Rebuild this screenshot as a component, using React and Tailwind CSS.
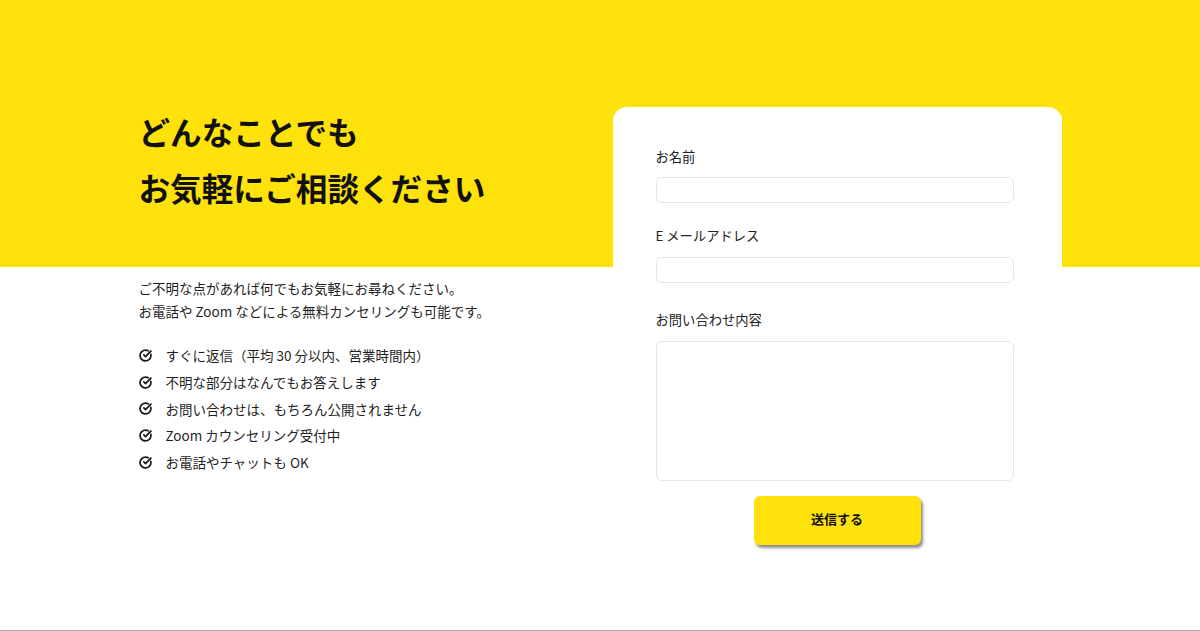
import React from "react";

function CheckIcon() {
  return (
    <svg width="13" height="13" viewBox="0 0 24 24" fill="none" stroke="#1a1a1a" strokeWidth="3.2" strokeLinecap="round" strokeLinejoin="round" className="shrink-0">
      <path d="M21.801 10A10 10 0 1 1 17 3.335" />
      <path d="m9 11 3 3L22 4" />
    </svg>
  );
}

const items = [
  "すぐに返信（平均 30 分以内、営業時間内）",
  "不明な部分はなんでもお答えします",
  "お問い合わせは、もちろん公開されません",
  "Zoom カウンセリング受付中",
  "お電話やチャットも OK",
];

export default function App() {
  return (
    <div
      className="h-[631px] w-full overflow-hidden border-b border-[#adadad] bg-[linear-gradient(to_bottom,#ffe20b_267px,#ffffff_267px)] text-[#1f1f1f]"
      style={{ fontFamily: '"Noto Sans CJK JP", "Noto Sans", sans-serif' }}
    >
      <div className="mx-auto flex w-[923px] justify-between pt-[103px]">
        <div className="flex flex-col">
          <h1 className="text-[31.6px] font-bold leading-[56px] text-[#111]">
            どんなことでも
            <br />
            お気軽にご相談ください
          </h1>
          <p className="mt-[62px] text-[13.5px] leading-[23px]">
            ご不明な点があれば何でもお気軽にお尋ねください。
            <br />
            お電話や Zoom などによる無料カンセリングも可能です。
          </p>
          <ul className="mt-[19px] flex flex-col">
            {items.map((t) => (
              <li key={t} className="flex items-center gap-[14px] text-[13.5px] leading-[26.75px]">
                <CheckIcon />
                <span>{t}</span>
              </li>
            ))}
          </ul>
        </div>
        <div className="mt-[4px] flex w-[449px] flex-col rounded-[14px] bg-white pb-[30px] pl-[43px] pt-[40px]">
          <label className="text-[13.3px] leading-[20px] text-[#222]">お名前</label>
          <div className="mt-[10px] h-[26px] w-[358px] rounded-[6px] border border-[#e6e6e6] bg-white" />
          <label className="mt-[23px] text-[13.3px] leading-[20px] text-[#222]">E メールアドレス</label>
          <div className="mt-[11px] h-[26px] w-[358px] rounded-[6px] border border-[#e6e6e6] bg-white" />
          <label className="mt-[27px] text-[13.3px] leading-[20px] text-[#222]">お問い合わせ内容</label>
          <div className="mt-[11px] h-[140px] w-[358px] rounded-[6px] border border-[#e6e6e6] bg-white" />
          <div className="mt-[15px] flex w-[358px] justify-center">
            <button className="ml-[5px] flex h-[49px] w-[167px] items-center justify-center rounded-[6px] bg-[#ffe20b] pb-[3px] text-[13px] font-bold text-[#111] shadow-[2px_3px_3px_rgba(0,0,0,0.45)]">
              送信する
            </button>
          </div>
        </div>
      </div>
    </div>
  );
}
